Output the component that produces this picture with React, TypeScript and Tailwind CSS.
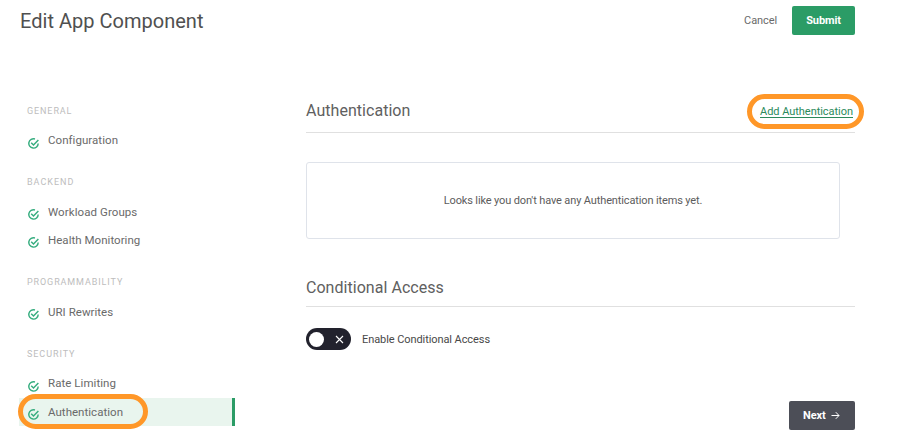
import React from "react";

function CheckIcon() {
  return (
    <svg viewBox="0 0 12 12" className="mt-[5px] ml-px size-[11px] shrink-0" fill="none" stroke="#36ad7f" strokeWidth="1.6">
      <path d="M7.6 1.1A5.1 5.1 0 1 0 11.1 6" />
      <path d="M3.5 5.2l2.5 2.5 5.3-5.6" />
    </svg>
  );
}

type Item = { label: string; tracking: string; offset: string; active?: boolean };

function NavItem({ label, tracking, offset, active }: Item) {
  return (
    <li className={`flex h-7 items-center gap-[9px] pl-[8px] ${active ? "border-r-[3px] border-[#2b9c66] bg-[#e9f5ee]" : ""}`}>
      <CheckIcon />
      <span className={`text-[11.5px] leading-none whitespace-nowrap ${offset} ${tracking}`}>{label}</span>
    </li>
  );
}

function NavSection({ title, tracking, className, items }: { title: string; tracking: string; className: string; items: Item[] }) {
  return (
    <section className={`flex flex-col gap-2 ${className}`}>
      <h2 className={`h-4 pl-[8px] text-[9px] leading-4 text-[#bdbdbd] ${tracking}`}>{title}</h2>
      <ul>
        {items.map((item) => (
          <NavItem key={item.label} {...item} />
        ))}
      </ul>
    </section>
  );
}

export default function App() {
  return (
    <div className="relative flex h-[445px] w-[897px] flex-col overflow-hidden bg-white font-[Roboto,sans-serif] text-[#6a6a6a]">
      <header className="flex h-[41px] items-center justify-between pr-[42px] pl-[20px]">
        <h1 className="text-[20px] leading-none tracking-[0.02px] text-[#505050]">Edit App Component</h1>
        <div className="flex items-center gap-[15px] text-[11px]">
          <button className="pt-[2px] tracking-[-0.1px]">Cancel</button>
          <button className="h-[29px] w-[63px] rounded-[2px] bg-[#2b9c66] pt-px font-bold tracking-[-0.1px] text-white">Submit</button>
        </div>
      </header>

      <div className="flex flex-1 pl-[19px]">
        <nav className="flex w-[216px] flex-col pt-[62px]">
          <NavSection title="GENERAL" tracking="tracking-[0.9px]" className="mb-[19px]" items={[{ label: "Configuration", tracking: "tracking-[0.05px]", offset: "pt-0" }]} />
          <NavSection
            title="BACKEND"
            tracking="tracking-[1px]"
            className="mb-5"
            items={[
              { label: "Workload Groups", tracking: "tracking-[0.08px]", offset: "pt-[2px]" },
              { label: "Health Monitoring", tracking: "tracking-[0.03px]", offset: "pt-[2px]" },
            ]}
          />
          <NavSection title="PROGRAMMABILITY" tracking="tracking-[0.9px]" className="mb-5" items={[{ label: "URI Rewrites", tracking: "tracking-[0.03px]", offset: "pt-[2px]" }]} />
          <NavSection
            title="SECURITY"
            tracking="tracking-[0.95px]"
            className=""
            items={[
              { label: "Rate Limiting", tracking: "tracking-[0.05px]", offset: "pt-0" },
              { label: "Authentication", tracking: "tracking-[0.03px]", offset: "pt-px", active: true },
            ]}
          />
        </nav>

        <main className="ml-[71px] flex w-[549px] flex-col pt-[48px]">
          <div className="flex h-11 items-center justify-between border-b border-[#e0e0e0] pr-[2px]">
            <h2 className="pt-px text-[16px] tracking-[0.04px] text-[#606060]">Authentication</h2>
            <a href="#add" className="pt-[4px] text-[11px] tracking-[-0.04px] text-[#2b8a5b] underline underline-offset-2">Add Authentication</a>
          </div>
          <div className="mt-[29px] flex h-[77px] w-[534px] items-center justify-center rounded-[3px] border border-[#dfe3ea] pt-[2px] text-[11px] tracking-[-0.13px] text-[#5c5c5c]">
            <span>Looks like you don't have any Authentication items yet.</span>
          </div>
          <div className="mt-[27px] flex h-[41px] items-center border-b border-[#e0e0e0] pt-[4px]">
            <h2 className="text-[16px] tracking-[0.04px] text-[#606060]">Conditional Access</h2>
          </div>
          <label className="mt-[21px] flex h-[22px] items-center gap-[11px] text-[11px] text-[#484848]">
            <span className="flex h-[22px] w-[45px] items-center justify-between rounded-full bg-[#22222d] pr-[7px] pl-[3px]">
              <span className="size-[15px] rounded-full bg-white" />
              <svg viewBox="0 0 9 9" className="size-[9px]" stroke="white" strokeWidth="1.1">
                <path d="M1 1l7 7M8 1L1 8" />
              </svg>
            </span>
            <span className="pt-[2px] tracking-[-0.08px]">Enable Conditional Access</span>
          </label>
          <button className="mt-[51px] flex h-[29px] w-[66px] items-center gap-[5px] self-end rounded-[2px] bg-[#4c4e57] pl-[14px] text-[11px] font-bold text-white">
            <span className="pt-px tracking-[-0.1px]">Next</span>
            <svg viewBox="0 0 9 9" className="size-[9px]" fill="none" stroke="white" strokeWidth="1">
              <path d="M0.5 4.5H8M4.8 1.2L8 4.5 4.8 7.8" />
            </svg>
          </button>
        </main>
      </div>

      <div className="pointer-events-none absolute top-[94px] left-[747px] h-[35px] w-[117px] rounded-full border-[5px] border-[#ff9728]" />
      <div className="pointer-events-none absolute top-[394px] left-[18px] h-[35px] w-[130px] rounded-full border-[5px] border-[#ff9728]" />
    </div>
  );
}
